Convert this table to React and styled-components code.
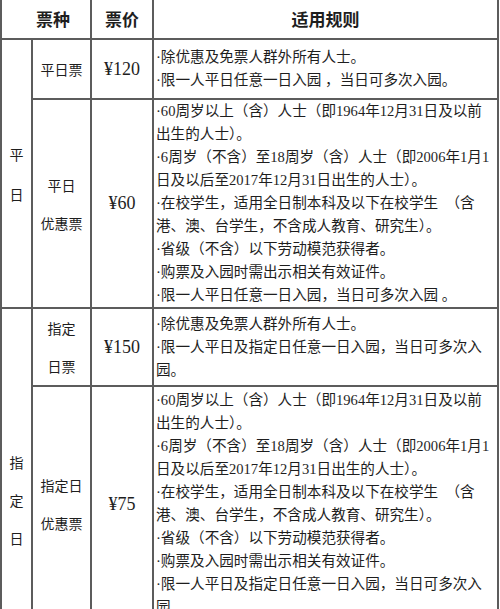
import React from "react";
import styled, { createGlobalStyle } from "styled-components";

const PageStyle = createGlobalStyle`
body {
    margin: 0;
    background: #FFFFFF;
}
`;

const Wrapper = styled.div`
width: 500px;
height: 609px;
overflow: hidden;
`;

const Table = styled.table`
width: 499px;
margin-top: -4px;
border-collapse: collapse;
table-layout: fixed;
color: #1e1e1e;
font-family: "Liberation Serif", "Noto Sans CJK SC", serif;
`;

const HeadCell = styled.th`
height: 40px;
padding: 0 0 0 ${props => props.shift || 0}px;
border: 2px solid #5c5c5c;
text-align: center;
vertical-align: middle;
font-family: "Noto Sans CJK SC", sans-serif;
font-size: 17px;
font-weight: 700;
`;

const LabelCell = styled.td`
padding: ${props => props.offset || 0}px 0 0 0;
border: 2px solid #5c5c5c;
text-align: center;
vertical-align: middle;
font-family: "Noto Sans CJK SC", sans-serif;
font-size: 14px;
line-height: ${props => props.lineGap || 38}px;
`;

const PriceCell = styled.td`
padding: 0;
border: 2px solid #5c5c5c;
text-align: center;
vertical-align: middle;
font-size: 18px;
`;

const RuleCell = styled.td`
padding: ${props => props.pad || 0}px 0 ${props => props.pad || 0}px 2px;
border: 2px solid #5c5c5c;
vertical-align: middle;
font-size: 14.6px;
line-height: 23px;
`;

const RuleLine = styled.div`
white-space: pre;
`;

const generalWeekday = [
    "·除优惠及免票人群外所有人士。",
    "·限一人平日任意一日入园 ，当日可多次入园。",
];

const discountLines = (lastLines) => [
    "·60周岁以上（含）人士（即1964年12月31日及以前",
    "出生的人士）。",
    "·6周岁（不含）至18周岁（含）人士（即2006年1月1",
    "日及以后至2017年12月31日出生的人士）。",
    "·在校学生，适用全日制本科及以下在校学生  （含",
    "港、澳、台学生，不含成人教育、研究生）。",
    "·省级（不含）以下劳动模范获得者。",
    "·购票及入园时需出示相关有效证件。",
    ...lastLines,
];

const generalSpecial = [
    "·除优惠及免票人群外所有人士。",
    "·限一人平日及指定日任意一日入园，当日可多次入",
    "园。",
];

function Rules({ lines, pad }) {
    return (
        <RuleCell pad={pad}>
            {lines.map((line, i) => (
                <RuleLine key={i}>{line}</RuleLine>
            ))}
        </RuleCell>
    );
}

function App() {
    return (
        <Wrapper>
            <PageStyle />
            <Table>
                <colgroup>
                    <col style={{ width: "31px" }} />
                    <col style={{ width: "59px" }} />
                    <col style={{ width: "62px" }} />
                    <col />
                </colgroup>
                <thead>
                    <tr>
                        <HeadCell colSpan={2} shift={14}>票种</HeadCell>
                        <HeadCell>票价</HeadCell>
                        <HeadCell>适用规则</HeadCell>
                    </tr>
                </thead>
                <tbody>
                    <tr>
                        <LabelCell rowSpan={2} lineGap={40}>平<br />日</LabelCell>
                        <LabelCell>平日票</LabelCell>
                        <PriceCell>¥120</PriceCell>
                        <Rules lines={generalWeekday} pad={6} />
                    </tr>
                    <tr>
                        <LabelCell>平日<br />优惠票</LabelCell>
                        <PriceCell>¥60</PriceCell>
                        <Rules lines={discountLines(["·限一人平日任意一日入园，当日可多次入园 。"])} />
                    </tr>
                    <tr>
                        <LabelCell rowSpan={2} offset={70}>指<br />定<br />日</LabelCell>
                        <LabelCell>指定<br />日票</LabelCell>
                        <PriceCell>¥150</PriceCell>
                        <Rules lines={generalSpecial} pad={3} />
                    </tr>
                    <tr>
                        <LabelCell>指定日<br />优惠票</LabelCell>
                        <PriceCell>¥75</PriceCell>
                        <Rules
                            lines={discountLines(["·限一人平日及指定日任意一日入园，当日可多次入", "园。"])}
                            pad={2}
                        />
                    </tr>
                </tbody>
            </Table>
        </Wrapper>
    );
}

export default App;
